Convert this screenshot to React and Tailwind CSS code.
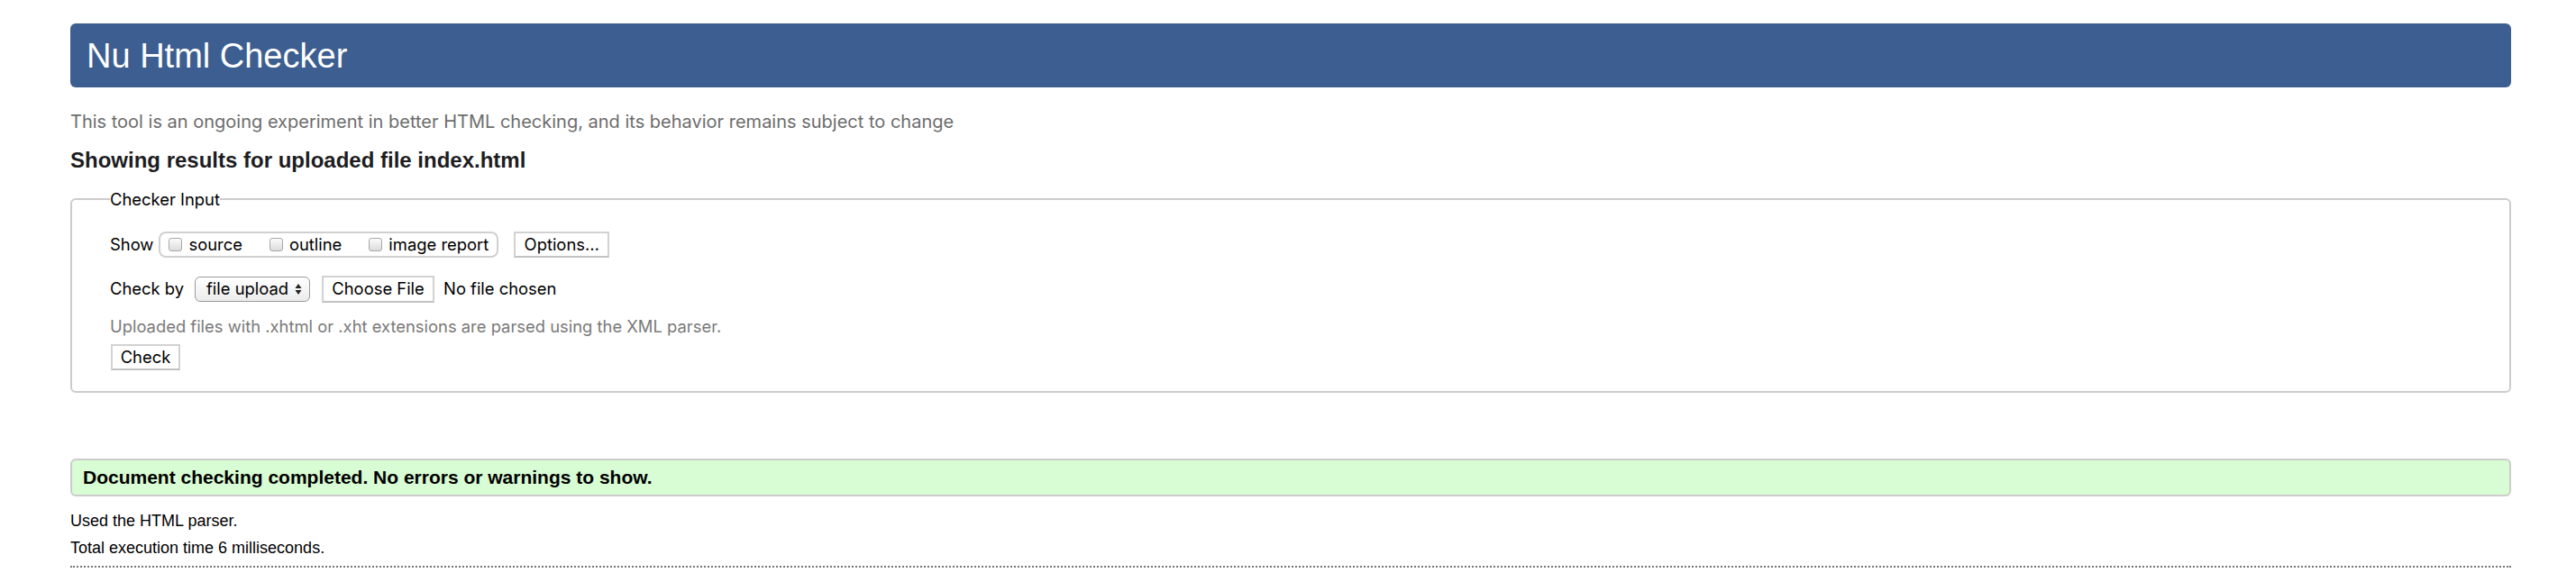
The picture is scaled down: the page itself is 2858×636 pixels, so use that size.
import React from "react";

function Checkbox({ label }) {
  return (
    <label className="flex items-center">
      <span className="w-[15px] h-[15px] rounded-[3px] border border-[#a9a9a9] bg-gradient-to-b from-[#fbfbfb] to-[#dcdcdc]" />
      <span className="ml-[7px]">{label}</span>
    </label>
  );
}

function Button({ children, className = "" }) {
  return (
    <span
      className={`flex items-center justify-center bg-white border-2 border-[#d2d2d2] border-b-[#c2c2c2] ${className}`}
    >
      {children}
    </span>
  );
}

export default function App() {
  return (
    <div
      className="ml-[78px] mr-[72px] pt-[26px] text-black"
      style={{ fontFamily: "Inter, 'Liberation Sans', sans-serif" }}
    >
      {/* header */}
      <h1
        className="h-[71px] flex items-center pl-[18px] rounded-[6px] bg-[#3c5e91] text-white text-[38px] leading-none"
        style={{ fontFamily: "'Liberation Sans', Arial, sans-serif" }}
      >
        Nu Html Checker
      </h1>

      <p className="mt-[27px] text-[20px] leading-[23px] text-[#6d6d6d]">
        This tool is an ongoing experiment in better HTML checking, and its behavior remains subject to change
      </p>

      <h2
        className="mt-[17px] text-[24px] leading-[28px] font-bold text-[#1d1d1f]"
        style={{ fontFamily: "'Liberation Sans', Arial, sans-serif" }}
      >
        Showing results for uploaded file index.html
      </h2>

      {/* checker input */}
      <fieldset className="mt-[18px] border-2 border-[#cccccc] rounded-[6px] px-[42px] pb-[23px] text-[18.4px]">
        <legend className="leading-[22px] px-0">Checker Input</legend>

        <div className="mt-[25px] flex items-center h-[29px]">
          <span>Show</span>
          <div className="ml-[6px] h-[29px] flex items-center gap-[30px] px-[9px] border-2 border-[#d0d0d0] rounded-[8px]">
            <Checkbox label="source" />
            <Checkbox label="outline" />
            <Checkbox label="image report" />
          </div>
          <Button className="ml-[17px] h-[29px] w-[106px]">Options…</Button>
        </div>

        <div className="mt-[20px] flex items-center h-[30px]">
          <span>Check by</span>
          <span className="ml-[12px] h-[28px] w-[128px] flex items-center pl-[12px] pr-[8px] rounded-[6px] border-[1.5px] border-[#9a9a9a] bg-gradient-to-b from-white to-[#ececec]">
            <span>file upload</span>
            <svg className="ml-auto" width="8" height="14" viewBox="0 0 8 14">
              <path d="M4 1 L7.5 6 H0.5 Z" fill="#222" />
              <path d="M4 13 L7.5 8 H0.5 Z" fill="#222" />
            </svg>
          </span>
          <Button className="ml-[13px] h-[30px] w-[125px]">Choose File</Button>
          <span className="ml-[10px]">No file chosen</span>
        </div>

        <p className="mt-[15px] leading-[22px] text-[#7a7a7a]">
          Uploaded files with .xhtml or .xht extensions are parsed using the XML parser.
        </p>

        <Button className="mt-[9px] h-[29px] w-[77px] ml-[1px]">Check</Button>
      </fieldset>

      {/* results */}
      <div className="mt-[73px] h-[42px] flex items-center px-[12px] rounded-[6px] border-2 border-[#cccccc] bg-[#d8fcd3]">
        <span
          className="text-[21px] font-bold"
          style={{ fontFamily: "'Liberation Sans', Arial, sans-serif" }}
        >
          Document checking completed. No errors or warnings to show.
        </span>
      </div>

      <div
        className="pt-[12px] text-[18px] leading-[30px] border-b-2 border-dotted border-[#777777] pb-[5px]"
        style={{ fontFamily: "'Liberation Sans', Arial, sans-serif" }}
      >
        <p>Used the HTML parser.</p>
        <p>Total execution time 6 milliseconds.</p>
      </div>
    </div>
  );
}
